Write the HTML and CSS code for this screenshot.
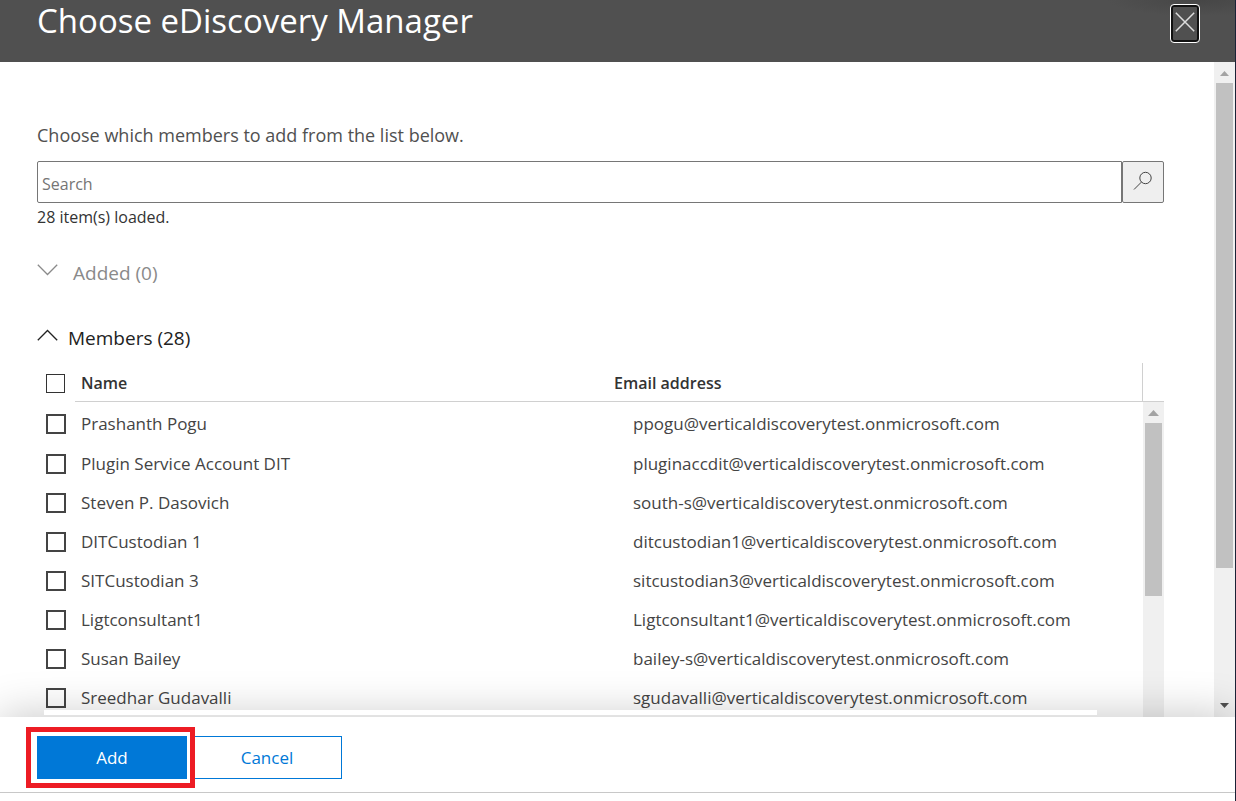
FILE: index.html
```html
<!DOCTYPE html>
<html lang="en">
<head>
<meta charset="utf-8">
<title>Choose eDiscovery Manager</title>
<link rel="stylesheet" href="styles.css">
</head>
<body>
<header class="header">
  <h1 class="title">Choose eDiscovery Manager</h1>
  <button class="close" type="button" aria-label="Close">
    <svg width="20" height="20" viewBox="0 0 20 20"><path d="M.8.8l18.4 18.4M19.2.8L.8 19.2"/></svg>
  </button>
</header>
<div class="viewport">
  <main class="content">
    <label class="intro" for="search">Choose which members to add from the list below.</label>
    <form class="search">
      <input class="search-box" id="search" type="text" placeholder="Search">
      <button class="search-button" type="button" aria-label="Search">
        <svg width="20" height="20" viewBox="0 0 20 20"><circle cx="12.5" cy="7" r="5.7"/><path d="M8.4 11.1L1 18.5"/></svg>
      </button>
    </form>
    <p class="status">28 item(s) loaded.</p>
    <button class="group group-added" type="button">
      <svg width="21" height="12" viewBox="0 0 21 12"><path d="M.8.8l9.7 9.7L20.2.8"/></svg>
      <span>Added (0)</span>
    </button>
    <button class="group group-members" type="button">
      <svg width="21" height="12" viewBox="0 0 21 12"><path d="M.8 11.2l9.7-9.7 9.7 9.7"/></svg>
      <span>Members (28)</span>
    </button>
    <div class="list">
      <table class="members">
        <thead>
          <tr><th class="pick"><input type="checkbox" aria-label="Select all"></th><th class="name">Name</th><th class="email">Email address</th></tr>
        </thead>
        <tbody>
          <tr><td><input type="checkbox" id="m1"></td><td><label for="m1">Prashanth Pogu</label></td><td>ppogu@verticaldiscoverytest.onmicrosoft.com</td></tr>
          <tr><td><input type="checkbox" id="m2"></td><td><label for="m2">Plugin Service Account DIT</label></td><td>pluginaccdit@verticaldiscoverytest.onmicrosoft.com</td></tr>
          <tr><td><input type="checkbox" id="m3"></td><td><label for="m3">Steven P. Dasovich</label></td><td>south-s@verticaldiscoverytest.onmicrosoft.com</td></tr>
          <tr><td><input type="checkbox" id="m4"></td><td><label for="m4">DITCustodian 1</label></td><td>ditcustodian1@verticaldiscoverytest.onmicrosoft.com</td></tr>
          <tr><td><input type="checkbox" id="m5"></td><td><label for="m5">SITCustodian 3</label></td><td>sitcustodian3@verticaldiscoverytest.onmicrosoft.com</td></tr>
          <tr><td><input type="checkbox" id="m6"></td><td><label for="m6">Ligtconsultant1</label></td><td>Ligtconsultant1@verticaldiscoverytest.onmicrosoft.com</td></tr>
          <tr><td><input type="checkbox" id="m7"></td><td><label for="m7">Susan Bailey</label></td><td>bailey-s@verticaldiscoverytest.onmicrosoft.com</td></tr>
          <tr><td><input type="checkbox" id="m8"></td><td><label for="m8">Sreedhar Gudavalli</label></td><td>sgudavalli@verticaldiscoverytest.onmicrosoft.com</td></tr>
        </tbody>
      </table>
      <div class="list-side">
        <div class="corner"></div>
        <div class="track">
          <svg class="arrow" width="21" height="21" viewBox="0 0 21 21"><path d="M5 14l5.500-6 5.500 6z"/></svg>
          <div class="thumb thumb-list"></div>
        </div>
      </div>
    </div>
  </main>
  <div class="track">
    <svg class="arrow" width="21" height="21" viewBox="0 0 21 21"><path d="M6 14l4.500-5 4.500 5z"/></svg>
    <div class="thumb thumb-page"></div>
    <svg class="arrow arrow-down" width="21" height="21" viewBox="0 0 21 21"><path d="M6 7h9l-4.500 5z"/></svg>
  </div>
</div>
<footer class="footer">
  <div class="highlight"><button class="button primary" type="button">Add</button></div>
  <button class="button" type="button">Cancel</button>
</footer>
</body>
</html>
```
FILE: styles.css
```css
* { box-sizing: border-box; }

body {
  margin: 0;
  height: 100vh;
  padding-bottom: 8px;
  display: flex;
  flex-direction: column;
  overflow: hidden;
  background: #fff;
  border-right: 1px solid #1a2236;
  color: #333;
  font: 17px/24px "Open Sans", "Noto Sans", sans-serif;
}

button, input { font: inherit; color: inherit; margin: 0; }
svg { fill: none; stroke: currentColor; display: block; }

.header {
  flex: none;
  height: 62px;
  padding: 0 35px 0 37px;
  display: flex;
  justify-content: space-between;
  align-items: flex-start;
  color: #fff;
  background: radial-gradient(ellipse 90px 16px at 97% 0, #464646, #505050);
}
.title { margin: 0; font-size: 33px; line-height: 42px; font-weight: 400; }
.close {
  width: 30px;
  height: 39px;
  margin-top: 4px;
  padding: 0 0 4px;
  display: grid;
  place-items: center;
  color: #ddd;
  background: #505050;
  border: 1px solid #fff;
  border-radius: 4px;
  box-shadow: inset 0 0 0 2px #111;
}
.close svg { stroke-width: 1.5; }

.viewport { flex: 1; min-height: 0; display: flex; }
.content {
  flex: 1;
  min-width: 0;
  padding: 61px 50px 0 37px;
  display: flex;
  flex-direction: column;
  align-items: stretch;
  overflow: hidden;
}
.intro { font-size: 18px; color: #505050; }
.search { display: flex; margin-top: 14px; }
.search-box {
  flex: 1;
  min-width: 0;
  height: 42px;
  padding: 3px 4px 0;
  border: 1px solid #767676;
  border-radius: 2px 0 0 2px;
  background: #fff;
  font-size: 16px;
}
.search-box::placeholder { color: #757575; opacity: 1; }
.search-button {
  width: 42px;
  padding: 0 0 2px;
  display: grid;
  place-items: center;
  color: #444;
  background: #efefef;
  border: 1px solid #767676;
  border-radius: 2px;
}
.status { margin: 2px 0 0; font-size: 16px; }

.group {
  align-self: flex-start;
  display: flex;
  align-items: center;
  padding: 0;
  border: 0;
  background: none;
  font-size: 19px;
  line-height: 26px;
}
.group svg { margin-bottom: 7px; stroke-width: 1.3; }
.group-added { margin-top: 31px; gap: 15px; color: #8a8a8a; }
.group-members { margin-top: 39px; gap: 10px; color: #222; }

.list { flex: 1; min-height: 0; margin-top: 12px; display: flex; }
.members { flex: 1; align-self: flex-start; border-collapse: separate; border-spacing: 0; table-layout: fixed; }
.members th, .members td { height: 39px; padding: 0; text-align: left; vertical-align: middle; }
.members th { padding-top: 2px; font-size: 16px; font-weight: 600; border-bottom: 1px solid #d0d0d0; }
.members th.pick {
  width: 44px;
  border-bottom: 0;
  background: linear-gradient(#d0d0d0, #d0d0d0) right bottom / 6px 1px no-repeat;
}
.members th.email { width: 528px; }
.members td { color: #444; }
.members td:last-child { padding-left: 19px; }
.members tbody tr:first-child td { height: 42px; padding-top: 2px; }
.members input {
  appearance: none;
  display: block;
  width: 19px;
  height: 19px;
  margin-left: 9px;
  border: 1px solid #333;
  background: #fff;
}
.members td input { width: 20px; height: 20px; border-width: 2px; border-color: #444; }

.list-side { flex: none; width: 22px; display: flex; flex-direction: column; align-items: flex-end; }
.corner { width: 22px; height: 39px; border: solid #d0d0d0; border-width: 0 0 1px 1px; }
.track {
  flex: none;
  width: 21px;
  display: flex;
  flex-direction: column;
  align-items: center;
  background: #f0f0f0;
}
.list-side .track { flex: 1; }
.arrow { flex: none; fill: #a3a3a3; stroke: none; }
.arrow-down { margin-top: auto; fill: #505050; }
.thumb { width: 17px; background: #c1c1c1; }
.thumb-list { height: 55%; }
.thumb-page { height: 74%; }

.footer {
  flex: none;
  position: relative;
  padding: 19px 37px 13px;
  display: flex;
  gap: 5px;
  background: #fff;
  border-bottom: 1px solid #c8c8c8;
  box-shadow: 0 -2px 44px rgba(0, 0, 0, .22);
  clip-path: inset(-60px 0 0 0);
}
/* Empty horizontal scroller of the list, resting on the footer's shadow */
.footer::before {
  content: "";
  position: absolute;
  left: 44px;
  right: 138px;
  top: -7px;
  height: 5px;
  background: #fff;
}
.button {
  width: 150px;
  height: 43px;
  padding: 0;
  color: #0078d7;
  background: #fff;
  border: 1px solid #0078d7;
}
.primary { color: #fff; background: #0078d7; }
.highlight { position: relative; z-index: 1; }
.highlight::after {
  content: "";
  position: absolute;
  inset: -9px -8px -9px -11px;
  border: 5px solid #ed1c24;
  pointer-events: none;
}
```
